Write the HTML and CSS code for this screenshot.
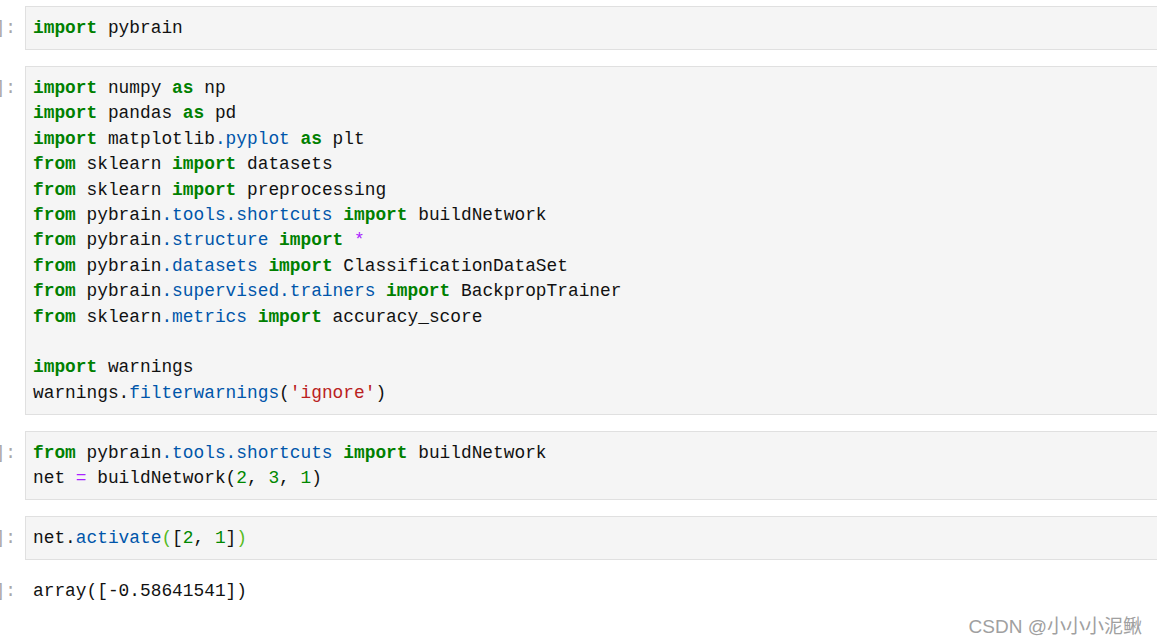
FILE: index.html
```html
<!DOCTYPE html>
<html lang="zh">
<head>
    <meta charset="UTF-8">
    <meta name="viewport" content="width=device-width, initial-scale=1.0">
    <title>pybrain notebook</title>
    <link rel="stylesheet" href="styles.css">
</head>
<body>
    <div class="notebook">
        <div class="cell">
            <div class="prompt"><span>In [1]:</span></div>
            <pre class="input"><span class="kw">import</span> pybrain</pre>
        </div>

        <div class="cell">
            <div class="prompt"><span>In [2]:</span></div>
<pre class="input"><span class="kw">import</span> numpy <span class="kw">as</span> np
<span class="kw">import</span> pandas <span class="kw">as</span> pd
<span class="kw">import</span> matplotlib<span class="nn">.pyplot</span> <span class="kw">as</span> plt
<span class="kw">from</span> sklearn <span class="kw">import</span> datasets
<span class="kw">from</span> sklearn <span class="kw">import</span> preprocessing
<span class="kw">from</span> pybrain<span class="nn">.tools.shortcuts</span> <span class="kw">import</span> buildNetwork
<span class="kw">from</span> pybrain<span class="nn">.structure</span> <span class="kw">import</span> <span class="op">*</span>
<span class="kw">from</span> pybrain<span class="nn">.datasets</span> <span class="kw">import</span> ClassificationDataSet
<span class="kw">from</span> pybrain<span class="nn">.supervised.trainers</span> <span class="kw">import</span> BackpropTrainer
<span class="kw">from</span> sklearn<span class="nn">.metrics</span> <span class="kw">import</span> accuracy_score

<span class="kw">import</span> warnings
warnings.<span class="nn">filterwarnings</span>(<span class="str">'ignore'</span>)</pre>
        </div>

        <div class="cell">
            <div class="prompt"><span>In [3]:</span></div>
<pre class="input"><span class="kw">from</span> pybrain<span class="nn">.tools.shortcuts</span> <span class="kw">import</span> buildNetwork
net <span class="op">=</span> buildNetwork(<span class="num">2</span>, <span class="num">3</span>, <span class="num">1</span>)</pre>
        </div>

        <div class="cell">
            <div class="prompt"><span>In [4]:</span></div>
            <pre class="input">net.<span class="nn">activate</span><span class="match">(</span>[<span class="num">2</span>, <span class="num">1</span>]<span class="match">)</span></pre>
        </div>

        <div class="cell output-cell">
            <div class="prompt"><span>Out[4]:</span></div>
            <pre class="output">array([-0.58641541])</pre>
        </div>
    </div>

    <div class="watermark">CSDN @小小小泥鳅</div>
</body>
</html>
```

FILE: styles.css
```css
html, body {
    margin: 0;
    padding: 0;
    overflow: hidden;
    background: #fff;
}
body {
    font-family: "Liberation Mono", "DejaVu Sans Mono", monospace;
    font-size: 17.84px;
    color: #111;
    height: 644px;
    position: relative;
}
.notebook {
    display: flex;
    flex-direction: column;
    gap: 16px;
    padding-top: 6px;
    margin-right: -30px;
}
.cell {
    display: flex;
    align-items: flex-start;
}
.prompt {
    width: 16px;
    flex: none;
    display: flex;
    justify-content: flex-end;
    overflow: hidden;
    white-space: nowrap;
    padding: 10px 9px 0 0;
    line-height: 25.4px;
    color: #a8a8a8;
}
pre {
    margin: 0;
    font: inherit;
    line-height: 25.4px;
}
.input {
    flex: 1;
    background: #f5f5f5;
    border: 1px solid #e0e0e0;
    padding: 9px 7px 7.5px;
}
.output-cell .prompt {
    padding-top: 3px;
}
.output {
    flex: 1;
    padding: 3px 8px 0;
}
.kw { color: #008000; font-weight: bold; }
.nn { color: #0055aa; }
.op { color: #aa22ff; }
.num { color: #008800; }
.str { color: #ba2121; }
.match { color: #55bb22; }
.watermark {
    position: absolute;
    right: 15px;
    bottom: 6px;
    font-family: "Liberation Sans", "Noto Sans CJK SC", sans-serif;
    font-size: 19px;
    color: #a0a0a0;
    text-shadow: 1px 1px 0 #fff;
}
```
